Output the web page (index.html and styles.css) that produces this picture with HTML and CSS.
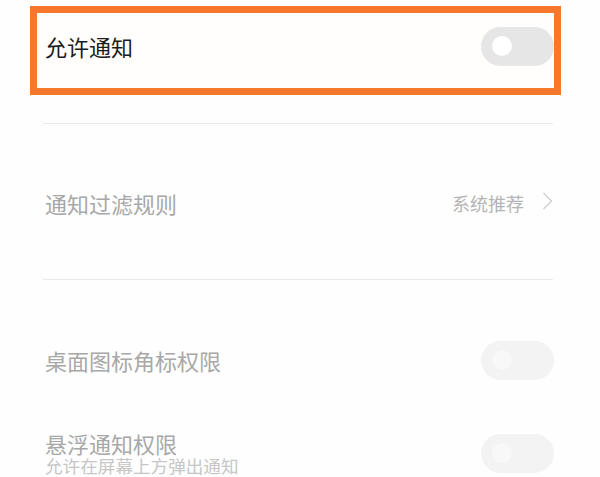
FILE: index.html
```html
<!DOCTYPE html>
<html lang="zh-CN">
<head>
<meta charset="utf-8">
<title>通知设置</title>
<link rel="stylesheet" href="styles.css">
</head>
<body>
<div class="page">
  <div class="row row-main highlight">
    <span class="title title-dark">允许通知</span>
    <span class="toggle toggle-off"><span class="knob"></span></span>
  </div>
  <div class="divider divider-1"></div>
  <div class="row row-filter">
    <span class="title">通知过滤规则</span>
    <span class="value">系统推荐
      <svg class="chevron" width="11" height="18" viewBox="0 0 11 18"><path d="M1.5 1 L9.5 9 L1.5 17" fill="none" stroke="#cfcfcf" stroke-width="1.4"/></svg>
    </span>
  </div>
  <div class="divider"></div>
  <div class="row row-badge">
    <span class="title">桌面图标角标权限</span>
    <span class="toggle toggle-faint"><span class="knob"></span></span>
  </div>
  <div class="row row-float">
    <div class="text-block">
      <span class="title">悬浮通知权限</span>
      <span class="subtitle">允许在屏幕上方弹出通知</span>
    </div>
    <span class="toggle toggle-faint"><span class="knob"></span></span>
  </div>
</div>
</body>
</html>
```
FILE: styles.css
```css
* { box-sizing: border-box; }
html, body {
  margin: 0;
  padding: 0;
  background: #fefefe;
  width: 600px;
  height: 477px;
  overflow: hidden;
}
body {
  font-family: "Noto Sans CJK SC", "Noto Sans", sans-serif;
}
.page {
  display: flex;
  flex-direction: column;
  padding-top: 6px;
}
.row {
  display: flex;
  align-items: center;
  justify-content: space-between;
}
.highlight {
  margin-left: 30px;
  width: 531px;
  height: 89px;
  border: 7px solid #f7782c;
  padding: 0 0 0 8px;
  background: #fffefd;
}
.highlight .toggle { margin-top: -9px; }
.title {
  font-size: 22px;
  line-height: 26px;
  color: #a8a8a8;
  white-space: nowrap;
}
.title-dark { color: #1c1c1c; margin-top: -10px; }
.divider {
  height: 1px;
  background: #e9e9e9;
  margin: 0 47px 0 43px;
}
.divider-1 { margin-top: 28px; }
.row-filter {
  height: 155px;
  padding: 3px 47px 0 45px;
}
.value {
  display: flex;
  align-items: center;
  gap: 18px;
  font-size: 18px;
  color: #b4b4b4;
  white-space: nowrap;
}
.chevron { margin-top: -5px; }
.row-badge {
  margin-top: 60px;
  height: 40px;
  padding: 0 46px 0 45px;
}
.row-float {
  margin-top: 50px;
  height: 46px;
  padding: 0 46px 0 45px;
}
.text-block {
  display: flex;
  flex-direction: column;
}
.subtitle {
  font-size: 17.6px;
  line-height: 20px;
  color: #c6c6c6;
  white-space: nowrap;
}
.toggle {
  width: 73px;
  height: 39px;
  border-radius: 20px;
  display: flex;
  align-items: center;
  padding-left: 11px;
  flex: none;
}
.toggle-off { background: #e6e6e6; }
.toggle-off .knob { background: #ffffff; }
.toggle-faint { background: #f3f3f3; }
.toggle-faint .knob { background: #f8f8f8; }
.knob {
  width: 20px;
  height: 20px;
  border-radius: 50%;
}
```
